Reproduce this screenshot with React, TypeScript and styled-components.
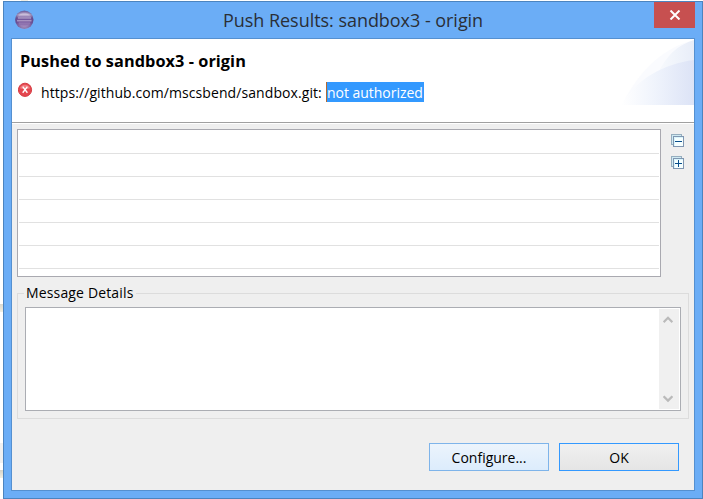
import React from "react";
import styled, { createGlobalStyle } from "styled-components";

const GlobalStyle = createGlobalStyle`
  * { box-sizing: border-box; }
  html, body { margin: 0; width: 703px; height: 499px; overflow: hidden; background: #fff; }
  body { font-family: "Open Sans", "Noto Sans", sans-serif; font-size: 14px; color: #000; }
`;

const Desktop = styled.div`
  width: 703px;
  height: 499px;
  padding: 1px 0 0 3px;
  background:
    linear-gradient(#f2efe3, #f2efe3) 21px 0 / 7px 1px no-repeat,
    linear-gradient(#dad7cd, #f2efe3) 0 304px / 3px 8px no-repeat,
    linear-gradient(#f0f0f0, #f0f0f0) 0 443px / 3px 20px no-repeat,
    linear-gradient(#d5d2c8, #f2efe3) 0 470px / 3px 8px no-repeat,
    #fff;
`;

const Window = styled.div`
  width: 700px;
  height: 498px;
  border: 1px solid #4c84bf;
  background: #6badf6;
  padding: 0 7px 7px;
  display: flex;
  flex-direction: column;
`;

const TitleBar = styled.header`
  height: 36px;
  flex: none;
  display: flex;
  align-items: flex-start;
`;

const AppIcon = styled.svg`
  width: 20px;
  height: 20px;
  margin: 7px 0 0 3px;
  flex: none;
`;

const Title = styled.h1`
  flex: 1;
  margin: 0 0 0 189px;
  font-size: 18px;
  line-height: 37px;
  font-weight: 400;
  color: #2a2f36;
  letter-spacing: -0.04px;
  white-space: nowrap;
`;

const CloseButton = styled.button`
  width: 41px;
  height: 26px;
  padding: 0;
  border: 0;
  background: #c75050;
  display: flex;
  align-items: center;
  justify-content: center;
`;

const Client = styled.main`
  flex: 1;
  width: 684px;
  border: 1px solid #5590d0;
  background: #efefef;
  display: flex;
  flex-direction: column;
`;

const Banner = styled.section`
  height: 85px;
  flex: none;
  background: #fff;
  border-bottom: 1px solid #fff;
  box-shadow: inset 0 -1px #a0a0a0;
  display: flex;
  justify-content: space-between;
`;

const BannerText = styled.div`
  padding: 10px 0 0 6px;
`;

const Heading = styled.h2`
  margin: 0 0 0 2px;
  font-size: 16.3px;
  line-height: 24px;
  font-weight: 700;
  letter-spacing: 0.06px;
  white-space: nowrap;
`;

const Message = styled.div`
  display: flex;
  align-items: center;
  margin-top: 8px;
  height: 22px;
  font-size: 14px;
  white-space: nowrap;
`;

const ErrorIcon = styled.svg`
  width: 15px;
  height: 15px;
  margin: -5px 8px 0 0;
`;

const Url = styled.span`
  width: 285px;
  letter-spacing: 0.08px;
`;

const Selected = styled.span`
  width: 98px;
  height: 20px;
  line-height: 22px;
  background: #3399ff;
  color: #fff;
  border-left: 1px solid #b46a32;
  letter-spacing: -0.03px;
`;

const Swoosh = styled.svg`
  width: 75px;
  height: 66px;
`;

const ResultArea = styled.section`
  height: 153px;
  flex: none;
  padding: 5px 0 0 5px;
  display: flex;
`;

const Table = styled.div`
  width: 644px;
  height: 148px;
  border: 1px solid #a9a9b0;
  background: #fff;
  padding: 1px;
`;

const Row = styled.div`
  height: 23px;
  border-bottom: 1px solid #e1e1e1;
`;

const Tools = styled.div`
  display: flex;
  flex-direction: column;
  padding: 5px 0 0 10px;
  gap: 9px;
`;

const ToolIcon = styled.svg`
  width: 13px;
  height: 13px;
  display: block;
`;

const Group = styled.fieldset`
  width: 672px;
  height: 136px;
  margin: 6px 0 0 5px;
  padding: 0 7px;
  border: 1px solid #dcdcdc;
  min-width: 0;
`;

const Legend = styled.legend`
  height: 20px;
  margin-left: -1px;
  width: 112px;
  padding: 0 2px;
  line-height: 20px;
  font-size: 14px;
  letter-spacing: 0.15px;
  white-space: nowrap;
`;

const Details = styled.div`
  width: 656px;
  height: 104px;
  margin-top: 4px;
  border: 1px solid #abadb3;
  background: #fff;
  padding: 1px;
  display: flex;
  justify-content: flex-end;
`;

const ScrollBar = styled.div`
  width: 20px;
  height: 100px;
  background: #f0f0f0;
  display: flex;
  flex-direction: column;
  align-items: center;
  justify-content: space-between;
  padding: 7px 2px 6px 0;
`;

const Actions = styled.footer`
  display: flex;
  gap: 10px;
  margin-top: 24px;
  padding-left: 417px;
`;

const Button = styled.button<{ $hot?: boolean }>`
  width: 120px;
  height: 28px;
  padding: 1px 0 0;
  border: 1px solid ${(p) => (p.$hot ? "#7eb4ea" : "#3399ff")};
  background: ${(p) =>
    p.$hot ? "linear-gradient(#ecf4fc, #dcecfc)" : "linear-gradient(#f0f0f0, #e5e5e5)"};
  font-family: inherit;
  font-size: 14px;
  line-height: 25px;
  color: #000;
`;

const Chevron = ({ down }: { down?: boolean }) => (
  <svg width="10" height="8" viewBox="0 0 10 8">
    <path d={down ? "M.6 1.2 5 5.6 9.4 1.2" : "M.6 6.2 5 1.8 9.4 6.2"} fill="none" stroke="#bababa" strokeWidth="2.2" />
  </svg>
);

const StackIcon = ({ plus }: { plus?: boolean }) => (
  <ToolIcon viewBox="0 0 13 13">
    <rect x=".5" y=".5" width="10" height="10" fill="#cfeaf2" stroke="#96aebf" />
    <rect x="2.5" y="2.5" width="10" height="10" fill="#f6ffff" stroke="#8096b1" />
    <path d="M3.5 12V3.5H12" fill="none" stroke="#d9f5fc" />
    <path d={plus ? "M4 7.5h7M7.5 4v7" : "M4 7.5h7"} stroke="#084e8c" />
  </ToolIcon>
);

export default function App() {
  return (
    <>
      <GlobalStyle />
      <Desktop>
        <Window>
          <TitleBar>
            <AppIcon viewBox="0 0 20 20">
              <defs>
                <linearGradient id="orb" x1="0" y1="0" x2="0" y2="1">
                  <stop offset="0" stopColor="#8673ac" />
                  <stop offset=".22" stopColor="#cdc2dc" />
                  <stop offset=".4" stopColor="#72589b" />
                  <stop offset=".65" stopColor="#7a599f" />
                  <stop offset="1" stopColor="#c0abd2" />
                </linearGradient>
                <radialGradient id="rim">
                  <stop offset=".7" stopColor="#3b2463" stopOpacity="0" />
                  <stop offset="1" stopColor="#4d4082" stopOpacity=".5" />
                </radialGradient>
              </defs>
              <circle cx="10.3" cy="10.8" r="9.1" fill="url(#orb)" />
              <circle cx="10.3" cy="10.8" r="9.2" fill="url(#rim)" />
              <path d="M4 9h13M3 11.8h14.5" stroke="#d7cae2" strokeOpacity=".75" />
              <path d="M5 14h11" stroke="#c5b3d6" strokeOpacity=".4" />
            </AppIcon>
            <Title>Push Results: sandbox3 - origin</Title>
            <CloseButton aria-label="Close">
              <svg width="12" height="10" viewBox="0 0 12 10">
                <path d="M1.5.5 10.5 9.5M10.5.5 1.5 9.5" stroke="#fff" strokeWidth="2" />
              </svg>
            </CloseButton>
          </TitleBar>
          <Client>
            <Banner>
              <BannerText>
                <Heading>Pushed to sandbox3 - origin</Heading>
                <Message>
                  <ErrorIcon viewBox="0 0 15 15">
                    <circle cx="7" cy="7.8" r="6.6" fill="#e4474f" stroke="#d63c43" />
                    <path d="M1.9 6.3a5.4 5.4 0 0 1 10.2 0Q7 8.3 1.9 6.3" fill="#f07a7e" />
                    <path d="m4.7 4.6 4.7 6.1M9.4 4.6 4.7 10.7" stroke="#fff" strokeWidth="1.4" />
                  </ErrorIcon>
                  <Url>https://github.com/mscsbend/sandbox.git:</Url>
                  <Selected>not authorized</Selected>
                </Message>
              </BannerText>
              <Swoosh viewBox="0 0 75 66">
                <defs>
                  <linearGradient id="wash">
                    <stop offset="0" stopColor="#f8fafd" />
                    <stop offset=".5" stopColor="#f0f4fb" />
                    <stop offset="1" stopColor="#e8edf8" />
                  </linearGradient>
                  <linearGradient id="deep">
                    <stop offset="0" stopColor="#fff" />
                    <stop offset=".45" stopColor="#f0f4fc" />
                    <stop offset="1" stopColor="#dce3f6" />
                  </linearGradient>
                </defs>
                <path d="M3 66C18 35 42 9 75 1V66Z" fill="#fafbfe" />
                <path d="M38 36C47 17 58 6 75 1V24Q54 27 38 36" fill="url(#wash)" />
                <path d="M2 66C18 39 45 25 75 21V66Z" fill="url(#deep)" />
              </Swoosh>
            </Banner>
            <ResultArea>
              <Table>
                <Row /><Row /><Row /><Row /><Row /><Row />
              </Table>
              <Tools>
                <StackIcon />
                <StackIcon plus />
              </Tools>
            </ResultArea>
            <Group>
              <Legend>Message Details</Legend>
              <Details>
                <ScrollBar>
                  <Chevron />
                  <Chevron down />
                </ScrollBar>
              </Details>
            </Group>
            <Actions>
              <Button $hot>Configure...</Button>
              <Button>OK</Button>
            </Actions>
          </Client>
        </Window>
      </Desktop>
    </>
  );
}
